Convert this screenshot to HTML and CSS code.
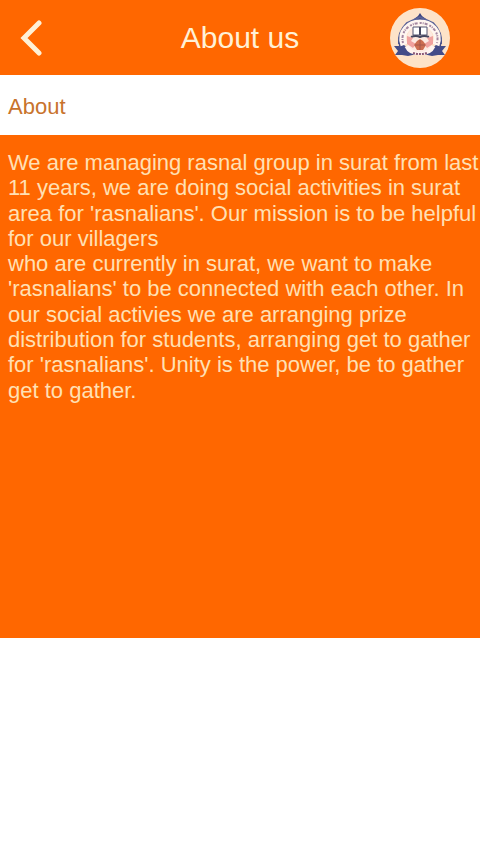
FILE: index.html
```html
<!DOCTYPE html>
<html lang="en">
<head>
<meta charset="utf-8">
<meta name="viewport" content="width=device-width, initial-scale=1">
<title>About us</title>
<link rel="stylesheet" href="styles.css">
</head>
<body>
<header class="header">
  <button type="button" class="back" aria-label="Back">
    <svg width="22" height="38" viewBox="0 0 22 38" aria-hidden="true">
      <path d="M19 4L4 19L19 34" fill="none" stroke="#fff1d6" stroke-width="5" stroke-linecap="round" stroke-linejoin="miter"/>
    </svg>
  </button>
  <h1 class="title">About us</h1>
  <svg class="logo" width="60" height="60" viewBox="0 0 60 60" role="img" aria-label="Group logo">
    <circle cx="30" cy="30" r="30" fill="#fde3c8"/>
    <!-- blue frame and ribbons -->
    <path d="M24 11L28 8L30 5L32 8L36 11L33 12H27Z" fill="#3b4480"/>
    <path d="M9 36C8 28 11 21 17 15L30 9L43 15C49 21 52 28 51 36" fill="none" stroke="#5a6296" stroke-width="2"/>
    <path d="M8 32L14 37L21 43L27 46L18 48L12 47L5 47L8 43L4 38L9 38Z" fill="#434c88"/>
    <path d="M52 32L46 37L39 43L33 46L42 48L48 47L55 47L52 43L56 38L51 38Z" fill="#434c88"/>
    <!-- name band -->
    <path d="M14 37C9 23 20 15 30 15S51 23 46 37" fill="none" stroke="#fff6f0" stroke-width="7"/>
    <path d="M13 35C10 23 20 15 30 15S50 23 47 35" fill="none" stroke="#a587a0" stroke-width="2" stroke-dasharray="2 1 1 1 3 2"/>
    <path d="M17 38C21 47 39 47 43 38" fill="none" stroke="#fff4ee" stroke-width="5"/>
    <!-- emblem -->
    <circle cx="30" cy="31" r="13" fill="#fdeae1"/>
    <path d="M23 19H37V27H23Z" fill="#fff" stroke="#555772" stroke-width="1"/>
    <path d="M30 19V27M21 29Q26 27 30 29Q34 27 39 29" fill="none" stroke="#454761" stroke-width="2"/>
    <path d="M17 28L23 30L21 33L26 36L23 40L17 36Z" fill="#f0a29e"/>
    <path d="M43 28L37 30L39 33L34 36L37 40L43 36Z" fill="#f0a29e"/>
    <path d="M27 33L30 31L33 33L36 37L33 42H27L24 37Z" fill="#cd6f50"/>
    <path d="M25 37H35M30 32V42" stroke="#a4584a" stroke-width="1"/>
    <path d="M23 45Q30 47 37 45" fill="none" stroke="#8d5a78" stroke-width="2" stroke-dasharray="2 1"/>
  </svg>
</header>
<main>
  <h2 class="subtitle">About</h2>
  <div class="content">
    <p>We are managing rasnal group in surat from last 11 years, we are doing social activities in surat area for 'rasnalians'. Our mission is to be helpful for our villagers<br>
    who are currently in surat, we want to make 'rasnalians' to be connected with each other. In our social activies we are arranging prize distribution for students, arranging get to gather for 'rasnalians'. Unity is the power, be to gather get to gather.</p>
  </div>
</main>
</body>
</html>
```
FILE: styles.css
```css
body {
	margin:0;
	background-color:#fff;
	font-family:"Liberation Sans", Arial, sans-serif;
}
.header {
	display:grid;
	grid-template-columns:1fr auto 1fr;
	align-items:center;
	height:75px;
	padding:0 30px 0 20px;
	background-color:#ff6700;
	box-sizing:border-box;
}
.back {
	justify-self:start;
	padding:0;
	border:0;
	background:none;
	cursor:pointer;
}
.back svg {
	display:block;
}
.title {
	margin:0;
	padding-left:10px;
	font-size:30px;
	font-weight:normal;
	color:#fff1d6;
}
.logo {
	justify-self:end;
}
.subtitle {
	margin:0;
	padding:19px 8px 16px;
	line-height:25px;
	font-size:22px;
	font-weight:normal;
	color:#c8732c;
}
.content {
	min-height:59vh;
	padding:15px 0 15px 8px;
	background-color:#ff6700;
	box-sizing:border-box;
}
.content p {
	margin:0;
	font-size:22px;
	line-height:1.15;
	color:#ffe0b4;
}
```
